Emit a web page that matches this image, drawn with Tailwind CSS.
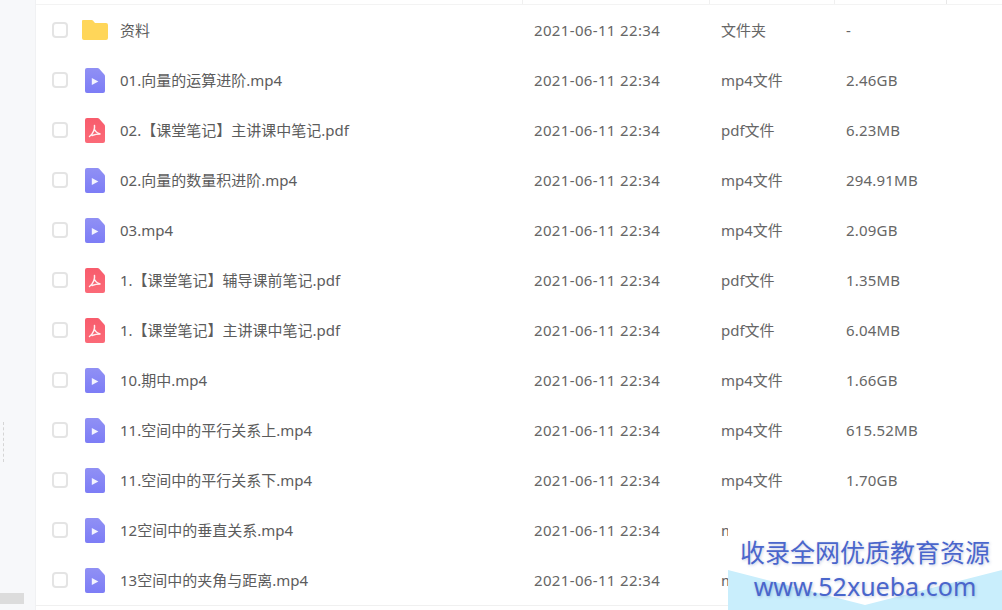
<!DOCTYPE html>
<html lang="zh">
<head>
  <meta charset="UTF-8">
  <title>文件列表</title>
  <script src="https://cdn.jsdelivr.net/npm/@tailwindcss/browser@4"></script>
</head>
<body class="w-[1002px] h-[610px] overflow-hidden bg-white">
  <!-- 渐变在 display:none 的 svg 里不生效，所以这里用 0 尺寸 -->
  <svg class="absolute h-0 w-0">
    <defs>
      <linearGradient id="videoFill" x1="0" y1="0" x2="0" y2="1"><stop offset="0" stop-color="#9090f4"/><stop offset="1" stop-color="#7d7df6"/></linearGradient>
      <linearGradient id="pdfFill" x1="0" y1="0" x2="0" y2="1"><stop offset="0" stop-color="#f85c6c"/><stop offset="1" stop-color="#fb6a78"/></linearGradient>
    </defs>
    <symbol id="folder" viewBox="0 0 26 20"><path d="M1 0h8.500c1 0 1.500.5 2.200 1.500L13 3h11a2 2 0 0 1 2 2v13a2 2 0 0 1-2 2H2a2 2 0 0 1-2-2V1a1 1 0 0 1 1-1z" fill="#ffd659"/></symbol>
    <symbol id="video" viewBox="0 0 20 25"><path d="M2 0h10.500q1 0 1.700.7l5.100 5.800q.7.800.7 1.800V23a2 2 0 0 1-2 2H2a2 2 0 0 1-2-2V2a2 2 0 0 1 2-2z" fill="url(#videoFill)"/><path d="M6.800 10v7l6.600-3.500z" fill="#fff" opacity=".9"/></symbol>
    <symbol id="pdf" viewBox="0 0 20 25"><path d="M2 0h10.500q1 0 1.700.7l5.100 5.800q.7.800.7 1.800V23a2 2 0 0 1-2 2H2a2 2 0 0 1-2-2V2a2 2 0 0 1 2-2z" fill="url(#pdfFill)"/><path d="M9.500 7.500c.5 3-1 8-5 11M9.500 11.500c1 2 3 4 6 4.500-3 0-6 .5-8.500 1.500" fill="none" stroke="#fff" stroke-width="1.500" stroke-linecap="round" opacity=".9"/></symbol>
  </svg>

  <div class="relative flex h-full font-['Noto_Sans','Noto_Sans_CJK_SC',sans-serif] text-[15px] text-[#666]">
    <!-- 左侧栏 -->
    <aside class="relative w-[36px] shrink-0 bg-[#f7f8fa] border-r border-[#f0f1f3]">
      <div class="absolute left-[3px] top-[422px] h-[40px] w-[3px] border-l border-dashed border-[#d5d5d5]"></div>
      <div class="absolute left-0 top-[593px] h-[11px] w-[24px] bg-[#dcdcdc]"></div>
    </aside>

    <main class="flex-1 min-w-0">
      <!-- 表头残留 -->
      <div class="flex h-[5px] border-b border-[#f3f3f3]">
        <div class="w-[487px] border-r border-[#f0f0f0]"></div>
        <div class="w-[187px] border-r border-[#f0f0f0]"></div>
        <div class="w-[125px] border-r border-[#f0f0f0]"></div>
        <div class="w-[112px] border-r border-[#e8e8e8]"></div>
      </div>

      <ul id="rows" class="border-b border-[#f0f0f0]">
        <li class="flex items-center h-[50px]"><span class="ml-[16px] h-[16px] w-[16px] rounded-[4px] border-2 border-[#e4e4e4]"></span><span class="flex w-[52px] justify-center pl-[1px]"><svg class="h-[20px] w-[26px]"><use href="#folder"/></svg></span><span class="w-[414px] text-[#5c5c5c]">资料</span><span class="w-[187px] tracking-[0.35px]">2021-06-11 22:34</span><span class="w-[125px]">文件夹</span><span class="tracking-[0.2px]">-</span></li>
        <li class="flex items-center h-[50px]"><span class="ml-[16px] h-[16px] w-[16px] rounded-[4px] border-2 border-[#e4e4e4]"></span><span class="flex w-[52px] justify-center pl-[1px]"><svg class="h-[25px] w-[20px]"><use href="#video"/></svg></span><span class="w-[414px] text-[#5c5c5c]">01.向量的运算进阶.mp4</span><span class="w-[187px] tracking-[0.35px]">2021-06-11 22:34</span><span class="w-[125px]">mp4文件</span><span class="tracking-[0.2px]">2.46GB</span></li>
        <li class="flex items-center h-[50px]"><span class="ml-[16px] h-[16px] w-[16px] rounded-[4px] border-2 border-[#e4e4e4]"></span><span class="flex w-[52px] justify-center pl-[1px]"><svg class="h-[25px] w-[20px]"><use href="#pdf"/></svg></span><span class="w-[414px] text-[#5c5c5c]">02.【课堂笔记】主讲课中笔记.pdf</span><span class="w-[187px] tracking-[0.35px]">2021-06-11 22:34</span><span class="w-[125px]">pdf文件</span><span class="tracking-[0.2px]">6.23MB</span></li>
        <li class="flex items-center h-[50px]"><span class="ml-[16px] h-[16px] w-[16px] rounded-[4px] border-2 border-[#e4e4e4]"></span><span class="flex w-[52px] justify-center pl-[1px]"><svg class="h-[25px] w-[20px]"><use href="#video"/></svg></span><span class="w-[414px] text-[#5c5c5c]">02.向量的数量积进阶.mp4</span><span class="w-[187px] tracking-[0.35px]">2021-06-11 22:34</span><span class="w-[125px]">mp4文件</span><span class="tracking-[0.2px]">294.91MB</span></li>
        <li class="flex items-center h-[50px]"><span class="ml-[16px] h-[16px] w-[16px] rounded-[4px] border-2 border-[#e4e4e4]"></span><span class="flex w-[52px] justify-center pl-[1px]"><svg class="h-[25px] w-[20px]"><use href="#video"/></svg></span><span class="w-[414px] text-[#5c5c5c]">03.mp4</span><span class="w-[187px] tracking-[0.35px]">2021-06-11 22:34</span><span class="w-[125px]">mp4文件</span><span class="tracking-[0.2px]">2.09GB</span></li>
        <li class="flex items-center h-[50px]"><span class="ml-[16px] h-[16px] w-[16px] rounded-[4px] border-2 border-[#e4e4e4]"></span><span class="flex w-[52px] justify-center pl-[1px]"><svg class="h-[25px] w-[20px]"><use href="#pdf"/></svg></span><span class="w-[414px] text-[#5c5c5c]">1.【课堂笔记】辅导课前笔记.pdf</span><span class="w-[187px] tracking-[0.35px]">2021-06-11 22:34</span><span class="w-[125px]">pdf文件</span><span class="tracking-[0.2px]">1.35MB</span></li>
        <li class="flex items-center h-[50px]"><span class="ml-[16px] h-[16px] w-[16px] rounded-[4px] border-2 border-[#e4e4e4]"></span><span class="flex w-[52px] justify-center pl-[1px]"><svg class="h-[25px] w-[20px]"><use href="#pdf"/></svg></span><span class="w-[414px] text-[#5c5c5c]">1.【课堂笔记】主讲课中笔记.pdf</span><span class="w-[187px] tracking-[0.35px]">2021-06-11 22:34</span><span class="w-[125px]">pdf文件</span><span class="tracking-[0.2px]">6.04MB</span></li>
        <li class="flex items-center h-[50px]"><span class="ml-[16px] h-[16px] w-[16px] rounded-[4px] border-2 border-[#e4e4e4]"></span><span class="flex w-[52px] justify-center pl-[1px]"><svg class="h-[25px] w-[20px]"><use href="#video"/></svg></span><span class="w-[414px] text-[#5c5c5c]">10.期中.mp4</span><span class="w-[187px] tracking-[0.35px]">2021-06-11 22:34</span><span class="w-[125px]">mp4文件</span><span class="tracking-[0.2px]">1.66GB</span></li>
        <li class="flex items-center h-[50px]"><span class="ml-[16px] h-[16px] w-[16px] rounded-[4px] border-2 border-[#e4e4e4]"></span><span class="flex w-[52px] justify-center pl-[1px]"><svg class="h-[25px] w-[20px]"><use href="#video"/></svg></span><span class="w-[414px] text-[#5c5c5c]">11.空间中的平行关系上.mp4</span><span class="w-[187px] tracking-[0.35px]">2021-06-11 22:34</span><span class="w-[125px]">mp4文件</span><span class="tracking-[0.2px]">615.52MB</span></li>
        <li class="flex items-center h-[50px]"><span class="ml-[16px] h-[16px] w-[16px] rounded-[4px] border-2 border-[#e4e4e4]"></span><span class="flex w-[52px] justify-center pl-[1px]"><svg class="h-[25px] w-[20px]"><use href="#video"/></svg></span><span class="w-[414px] text-[#5c5c5c]">11.空间中的平行关系下.mp4</span><span class="w-[187px] tracking-[0.35px]">2021-06-11 22:34</span><span class="w-[125px]">mp4文件</span><span class="tracking-[0.2px]">1.70GB</span></li>
        <li class="flex items-center h-[50px]"><span class="ml-[16px] h-[16px] w-[16px] rounded-[4px] border-2 border-[#e4e4e4]"></span><span class="flex w-[52px] justify-center pl-[1px]"><svg class="h-[25px] w-[20px]"><use href="#video"/></svg></span><span class="w-[414px] text-[#5c5c5c]">12空间中的垂直关系.mp4</span><span class="w-[187px] tracking-[0.35px]">2021-06-11 22:34</span><span class="w-[7px] overflow-hidden whitespace-nowrap">mp4文件</span></li>
        <li class="flex items-center h-[50px]"><span class="ml-[16px] h-[16px] w-[16px] rounded-[4px] border-2 border-[#e4e4e4]"></span><span class="flex w-[52px] justify-center pl-[1px]"><svg class="h-[25px] w-[20px]"><use href="#video"/></svg></span><span class="w-[414px] text-[#5c5c5c]">13空间中的夹角与距离.mp4</span><span class="w-[187px] tracking-[0.35px]">2021-06-11 22:34</span><span class="w-[7px] overflow-hidden whitespace-nowrap">mp4文件</span></li>
      </ul>
    </main>

    <!-- 水印 -->
    <div class="absolute left-[728px] top-[530px] h-[80px] w-[274px]">
      <div class="absolute inset-x-0 bottom-0 h-[40px] bg-[#c9eefc] [clip-path:polygon(0_0,50%_35px,100%_0,100%_100%,0_100%)]"></div>
      <div class="relative pt-[6px] text-center text-[25px] leading-[32px] whitespace-nowrap text-[#4a66cc] [text-shadow:1px_1px_3px_rgba(70,90,160,0.3)]">收录全网优质教育资源</div>
      <div class="relative pt-[2px] text-center text-[25px] leading-[32px] whitespace-nowrap text-[#4a66cc] [text-shadow:1px_1px_3px_rgba(70,90,160,0.3)]">www.52xueba.com</div>
    </div>
  </div>
</body>
</html>
